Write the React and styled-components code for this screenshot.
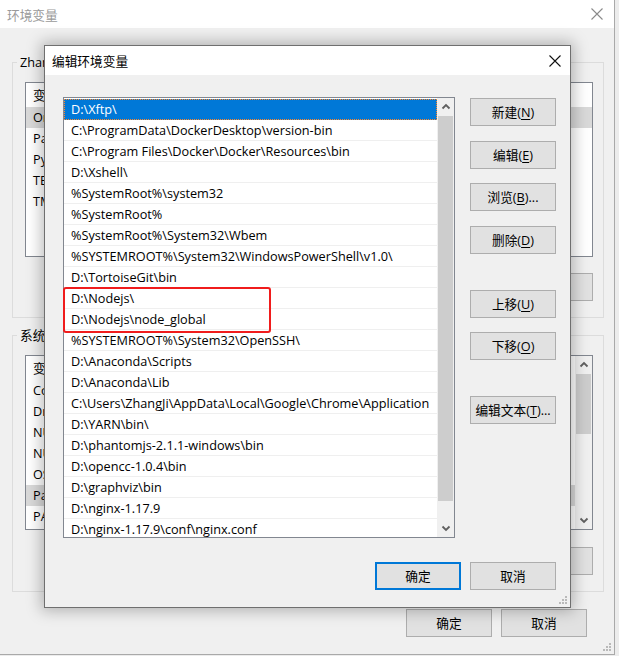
import React from 'react'
import styled, { createGlobalStyle } from 'styled-components'

const FONT = `"Open Sans", "Noto Sans CJK SC", sans-serif`

const GlobalStyle = createGlobalStyle`
  html, body { margin: 0; padding: 0; }
  body {
    font-family: ${FONT};
    font-size: 12.7px;
    color: #000;
    background: #ececec;
  }
  * { box-sizing: border-box; }
`

const paths = [
  'D:\\Xftp\\',
  'C:\\ProgramData\\DockerDesktop\\version-bin',
  'C:\\Program Files\\Docker\\Docker\\Resources\\bin',
  'D:\\Xshell\\',
  '%SystemRoot%\\system32',
  '%SystemRoot%',
  '%SystemRoot%\\System32\\Wbem',
  '%SYSTEMROOT%\\System32\\WindowsPowerShell\\v1.0\\',
  'D:\\TortoiseGit\\bin',
  'D:\\Nodejs\\',
  'D:\\Nodejs\\node_global',
  '%SYSTEMROOT%\\System32\\OpenSSH\\',
  'D:\\Anaconda\\Scripts',
  'D:\\Anaconda\\Lib',
  'C:\\Users\\ZhangJi\\AppData\\Local\\Google\\Chrome\\Application',
  'D:\\YARN\\bin\\',
  'D:\\phantomjs-2.1.1-windows\\bin',
  'D:\\opencc-1.0.4\\bin',
  'D:\\graphviz\\bin',
  'D:\\nginx-1.17.9',
  'D:\\nginx-1.17.9\\conf\\nginx.conf',
]

const userVars = ['OneDrive', 'Path', 'PyCharm', 'TEMP', 'TMP']
const sysVars = ['ComSpec', 'DriverData', 'NUMBER_OF_PROCESSORS', 'NUMBER_OF_PROCESSORS', 'OS', 'Path', 'PATHEXT']

const Desktop = styled.div`
  position: relative;
  width: 619px;
  height: 656px;
  overflow: hidden;
  background: #ececec;
`

const Window = styled.div`
  position: relative;
  width: 615px;
  height: 655px;
  background: #f0f0f0;
  border-right: 1px solid #a9a9a9;
  border-bottom: 1px solid #a9a9a9;
  display: flex;
  flex-direction: column;
`

const TitleBar = styled.div`
  flex-shrink: 0;
  height: ${p => p.$h}px;
  background: #fff;
  display: flex;
  align-items: center;
  justify-content: space-between;
  padding: 0 ${p => p.$pr}px 0 ${p => p.$pl}px;
  color: ${p => (p.$inactive ? '#9a9a9a' : '#000')};
`

const WindowBody = styled.div`
  flex: 1;
  display: flex;
  flex-direction: column;
  padding: 0 10px 0 12px;
`

const Group = styled.fieldset`
  margin: ${p => p.$mt}px 0 0;
  padding: 11px 10px 16px 12px;
  border: 1px solid #dcdcdc;
  min-width: 0;
`

const Legend = styled.legend`
  margin-left: -8px;
  padding: 0 3px;
  line-height: 18px;
`

const BgList = styled.div`
  display: flex;
  height: 175px;
  background: #fff;
  border: 1px solid #828790;
  overflow: hidden;
`

const BgRows = styled.div`
  flex: 1;
  min-width: 0;
`

const BgHeader = styled.div`
  height: 24px;
  line-height: 24px;
  padding-left: 7px;
`

const BgRow = styled.div`
  height: 21px;
  line-height: 21px;
  padding-left: 7px;
  white-space: nowrap;
  background: ${p => (p.$selected ? '#d9d9d9' : 'transparent')};
`

const ButtonRow = styled.div`
  display: flex;
  justify-content: flex-end;
  gap: 9px;
  margin-top: ${p => p.$mt || 0}px;
  padding-right: ${p => p.$pr || 0}px;
`

const Button = styled.div`
  width: 86px;
  height: 28px;
  display: flex;
  align-items: center;
  justify-content: center;
  background: #e1e1e1;
  border: ${p => (p.$primary ? '2px solid #0078d7' : '1px solid #adadad')};
  white-space: nowrap;
  line-height: 1;
  u { text-underline-offset: 2px; }
`

const Dialog = styled.div`
  position: absolute;
  left: 44px;
  top: 45px;
  width: 527px;
  height: 563px;
  background: #f0f0f0;
  border: 1px solid #6f6f6f;
  box-shadow: 0 0 14px 3px rgba(0, 0, 0, 0.26);
  display: flex;
  flex-direction: column;
`

const DialogBody = styled.div`
  flex: 1;
  display: flex;
  flex-direction: column;
  padding: 22px 14px 0 18px;
`

const TopRow = styled.div`
  display: flex;
  gap: 15px;
`

const PathList = styled.div`
  position: relative;
  width: 392px;
  height: 441px;
  display: flex;
  background: #fff;
  border: 1px solid #828790;
`

const Rows = styled.div`
  flex: 1;
  min-width: 0;
  padding-top: 1px;
  overflow: hidden;
`

const Row = styled.div`
  height: 21px;
  line-height: 20px;
  padding-left: 7px;
  white-space: nowrap;
  overflow: hidden;
  border-bottom: 1px solid ${p => (p.$selected ? '#0078d7' : '#efefef')};
  background: ${p => (p.$selected ? '#0078d7' : '#fff')};
  color: ${p => (p.$selected ? '#fff' : '#000')};
  outline: ${p => (p.$selected ? '1px dotted #ff8728' : 'none')};
  outline-offset: -1px;
`

const Mark = styled.div`
  position: absolute;
  left: -1px;
  top: 189px;
  width: 208px;
  height: 46px;
  border: 2px solid #f01c1c;
  border-radius: 3px;
`

const Scrollbar = styled.div`
  width: 17px;
  display: flex;
  flex-direction: column;
  background: #f0f0f0;
`

const Arrow = styled.div`
  height: 17px;
  display: flex;
  align-items: center;
  justify-content: center;
  flex-shrink: 0;
`

const Track = styled.div`
  flex: 1;
  padding: 1px 1px 0;
`

const Thumb = styled.div`
  height: ${p => p.$h}px;
  margin-top: ${p => p.$top || 0}px;
  background: #cdcdcd;
`

const ButtonCol = styled.div`
  display: flex;
  flex-direction: column;
  padding-top: 1px;
`

const ColButton = styled(Button)`
  margin-top: ${p => p.$mt}px;
`

const Grip = styled.svg`
  position: absolute;
  right: 2px;
  bottom: 2px;
`

const Chevron = ({ down }) => (
  <svg width="10" height="7" viewBox="0 0 10 7">
    <polyline
      points={down ? '1.5,1.5 5,5 8.5,1.5' : '1.5,5.5 5,2 8.5,5.5'}
      fill="none"
      stroke="#606060"
      strokeWidth="1.8"
    />
  </svg>
)

const CloseIcon = ({ color }) => (
  <svg width="12" height="12" viewBox="0 0 12 12">
    <path d="M0.5 0.5 L11.5 11.5 M11.5 0.5 L0.5 11.5" stroke={color} strokeWidth="1.1" />
  </svg>
)

const ResizeGrip = () => (
  <Grip width="10" height="10" viewBox="0 0 10 10">
    {[[8, 2], [5, 5], [8, 5], [2, 8], [5, 8], [8, 8]].map(([x, y]) => (
      <rect key={`${x}-${y}`} x={x - 1} y={y - 1} width="2" height="2" fill="#b9b9b9" />
    ))}
  </Grip>
)

const ScrollBox = ({ thumbTop, thumbHeight }) => (
  <Scrollbar>
    <Arrow><Chevron /></Arrow>
    <Track>
      <Thumb $top={thumbTop} $h={thumbHeight} />
    </Track>
    <Arrow><Chevron down /></Arrow>
  </Scrollbar>
)

const Label = ({ text, k, tail = '' }) => (
  <span>
    {text}(<u>{k}</u>){tail}
  </span>
)

const App = () => (
  <Desktop>
    <GlobalStyle />
    <Window>
      <TitleBar $h={28} $pl={7} $pr={11} $inactive>
        <span>环境变量</span>
        <CloseIcon color="#8a8a8a" />
      </TitleBar>
      <WindowBody>
        <Group $mt={25}>
          <Legend>ZhangJi 的用户变量(U)</Legend>
          <BgList>
            <BgRows>
              <BgHeader>变量</BgHeader>
              {userVars.map((v, i) => (
                <BgRow key={v} $selected={i === 0}>{v}</BgRow>
              ))}
            </BgRows>
          </BgList>
          <ButtonRow $mt={16}>
            <Button><Label text="新建" k="N" tail="..." /></Button>
            <Button><Label text="编辑" k="E" tail="..." /></Button>
            <Button><Label text="删除" k="D" /></Button>
          </ButtonRow>
        </Group>
        <Group $mt={8}>
          <Legend>系统变量(S)</Legend>
          <BgList>
            <BgRows>
              <BgHeader>变量</BgHeader>
              {sysVars.map((v, i) => (
                <BgRow key={i} $selected={i === 5}>{v}</BgRow>
              ))}
            </BgRows>
            <ScrollBox thumbTop={0} thumbHeight={60} />
          </BgList>
          <ButtonRow $mt={17}>
            <Button><Label text="新建" k="W" tail="..." /></Button>
            <Button><Label text="编辑" k="I" tail="..." /></Button>
            <Button><Label text="删除" k="L" /></Button>
          </ButtonRow>
        </Group>
        <ButtonRow $mt={17} $pr={17}>
          <Button>确定</Button>
          <Button>取消</Button>
        </ButtonRow>
      </WindowBody>
      <ResizeGrip />
    </Window>

    <Dialog>
      <TitleBar $h={29} $pl={7} $pr={9}>
        <span>编辑环境变量</span>
        <CloseIcon color="#111" />
      </TitleBar>
      <DialogBody>
        <TopRow>
          <PathList>
            <Rows>
              {paths.map((p, i) => (
                <Row key={p} $selected={i === 0}>{p}</Row>
              ))}
            </Rows>
            <ScrollBox thumbTop={0} thumbHeight={385} />
            <Mark />
          </PathList>
          <ButtonCol>
            <ColButton $mt={0}><Label text="新建" k="N" /></ColButton>
            <ColButton $mt={15}><Label text="编辑" k="E" /></ColButton>
            <ColButton $mt={14}><Label text="浏览" k="B" tail="..." /></ColButton>
            <ColButton $mt={15}><Label text="删除" k="D" /></ColButton>
            <ColButton $mt={36}><Label text="上移" k="U" /></ColButton>
            <ColButton $mt={14}><Label text="下移" k="O" /></ColButton>
            <ColButton $mt={36}><Label text="编辑文本" k="T" tail="..." /></ColButton>
          </ButtonCol>
        </TopRow>
        <ButtonRow $mt={24}>
          <Button $primary>确定</Button>
          <Button>取消</Button>
        </ButtonRow>
      </DialogBody>
      <ResizeGrip />
    </Dialog>
  </Desktop>
)

export default App
